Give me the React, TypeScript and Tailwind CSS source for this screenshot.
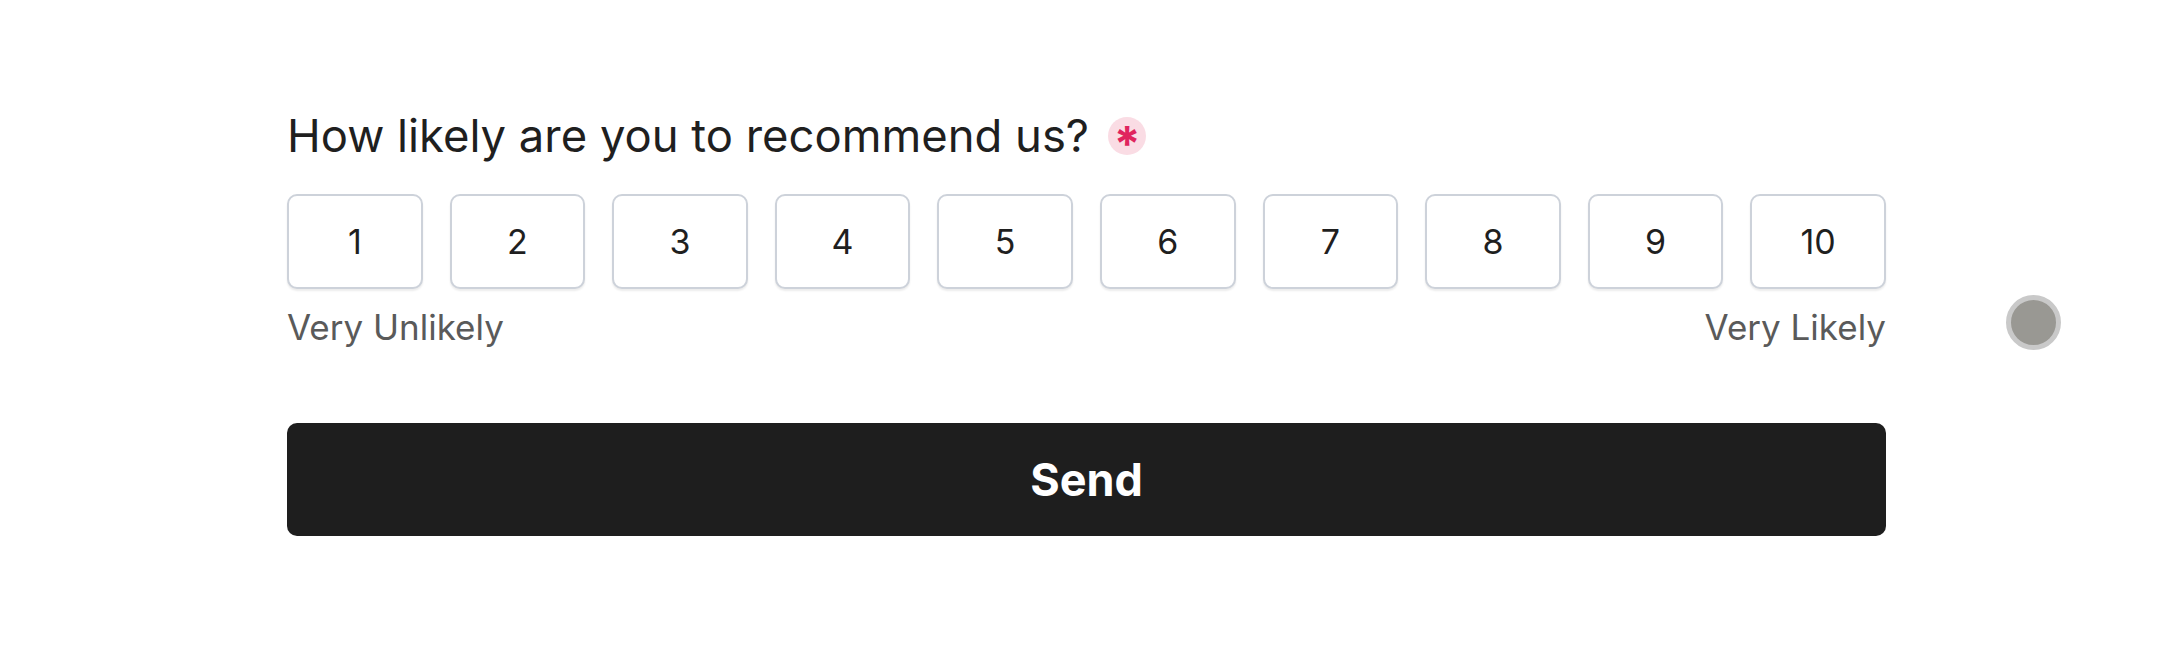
import React from "react";

export default function App() {
  const nums = [1, 2, 3, 4, 5, 6, 7, 8, 9, 10];
  return (
    <div
      className="relative w-[2165px] h-[660px] bg-white overflow-hidden"
      style={{ fontFamily: "Inter, 'Noto Sans', sans-serif" }}
    >
      <div className="absolute left-[2006px] top-[295px] w-[55px] h-[55px] rounded-full bg-[#999893] border-[5px] border-[#c9c9c9]" />
      <div className="ml-[287px] w-[1599px] pt-[109px] flex flex-col">
        <div className="flex items-center h-[54px]">
          <span className="text-[45.4px] leading-[54px] text-[#1f1f1f]">
            How likely are you to recommend us?
          </span>
          <span className="ml-[19px] w-[38px] h-[38px] rounded-full bg-[#fadce4] flex items-center justify-center text-[#e0245e] text-[48px] font-bold leading-none pt-[16px]">
            *
          </span>
        </div>
        <div className="mt-[31px] flex gap-[27px]">
          {nums.map((n) => (
            <div
              key={n}
              className="flex-1 h-[95px] rounded-[10px] border-[2px] border-[#cdd2da] bg-white shadow-[0_2px_2px_rgba(0,0,0,0.08)] flex items-center justify-center text-[34px] text-[#1f1f1f]"
            >
              {n}
            </div>
          ))}
        </div>
        <div className="mt-[18px] flex justify-between text-[35px] leading-[40px] text-[#5a5a5a]">
          <span>Very Unlikely</span>
          <span>Very Likely</span>
        </div>
        <div className="mt-[76px] h-[113px] rounded-[10px] bg-[#1e1e1e] flex items-center justify-center text-white text-[45px] font-bold">
          Send
        </div>
      </div>
    </div>
  );
}
